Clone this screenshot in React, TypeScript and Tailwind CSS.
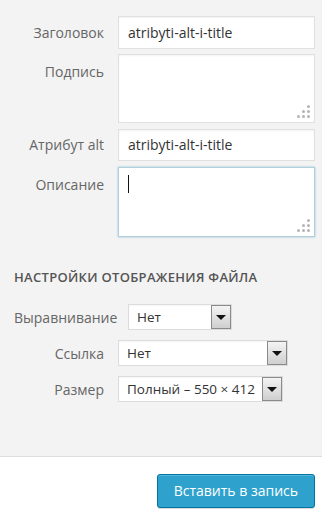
import React from "react";

const font = { fontFamily: '"Open Sans", "Noto Sans", sans-serif' };

function Grip() {
  // resize handle dots, triangle in bottom-right
  const dots = [
    [2, 0],
    [1, 1], [2, 1],
    [0, 2], [1, 2], [2, 2],
  ];
  return (
    <div className="absolute right-[3px] bottom-[3px] w-[14px] h-[14px]">
      {dots.map(([c, r], i) => (
        <span
          key={i}
          className="absolute w-[3px] h-[3px] rounded-full bg-[#b4b4b4]"
          style={{ left: c * 5, top: r * 5 }}
        />
      ))}
    </div>
  );
}

function Arrow() {
  return (
    <div className="w-[20px] self-stretch shrink-0 border border-[#8a8a8a] bg-gradient-to-b from-[#f4f4f4] to-[#cfcfcf] flex items-center justify-center">
      <span className="w-0 h-0 border-l-[5px] border-r-[5px] border-t-[5px] border-l-transparent border-r-transparent border-t-[#111]" />
    </div>
  );
}

function Select({ value, w }: { value: string; w: string }) {
  return (
    <div className={"h-[26px] flex items-stretch bg-white border border-[#dcdcdc] shadow-[inset_0_1px_2px_rgba(0,0,0,0.04)] " + w}>
      <span className="flex-1 pl-[8px] leading-[24px] text-[13.5px] text-[#333] whitespace-nowrap overflow-hidden">{value}</span>
      <Arrow />
    </div>
  );
}

export default function App() {
  return (
    <div style={font} className="w-[322px] h-[522px] bg-white flex flex-col overflow-hidden">
      <div className="bg-[#f3f3f3] h-[457px] border-b border-[#dedede] pt-[16px] pr-[7px] flex flex-col">
        {/* Заголовок */}
        <div className="flex">
          <div className="w-[104px] text-right text-[14px] text-[#666] leading-[33px]">Заголовок</div>
          <div className="ml-[14px] flex-1 h-[33px] bg-white border border-[#e0e0e0] shadow-[inset_0_1px_2px_rgba(0,0,0,0.05)] pl-[9px] text-[14px] leading-[31px] text-[#333]">
            atribyti-alt-i-title
          </div>
        </div>

        {/* Подпись */}
        <div className="flex mt-[5px]">
          <div className="w-[104px] text-right text-[14px] text-[#666] leading-[20px] pt-[8px]">Подпись</div>
          <div className="ml-[14px] flex-1 h-[69px] relative bg-white border border-[#e0e0e0] shadow-[inset_0_1px_2px_rgba(0,0,0,0.05)]">
            <Grip />
          </div>
        </div>

        {/* Атрибут alt */}
        <div className="flex mt-[6px]">
          <div className="w-[104px] text-right text-[14px] text-[#666] leading-[32px]">Атрибут alt</div>
          <div className="ml-[14px] flex-1 h-[32px] bg-white border border-[#e0e0e0] shadow-[inset_0_1px_2px_rgba(0,0,0,0.05)] pl-[9px] text-[14px] leading-[30px] text-[#333]">
            atribyti-alt-i-title
          </div>
        </div>

        {/* Описание */}
        <div className="flex mt-[6px]">
          <div className="w-[104px] text-right text-[14px] text-[#666] leading-[20px] pt-[8px]">Описание</div>
          <div className="ml-[14px] flex-1 h-[70px] relative bg-white border border-[#b4cfdc] shadow-[0_0_2px_rgba(30,140,190,0.45)]">
            <span className="absolute left-[9px] top-[7px] w-px h-[18px] bg-[#111]" />
            <Grip />
          </div>
        </div>

        {/* heading */}
        <div className="pl-[14px] mt-[30px] text-[13px] font-semibold text-[#555] tracking-[0.3px] leading-[20px] whitespace-nowrap">
          НАСТРОЙКИ ОТОБРАЖЕНИЯ ФАЙЛА
        </div>

        {/* Выравнивание */}
        <div className="flex items-center mt-[17px] pl-[14px]">
          <span className="w-[99px] shrink-0 text-[14px] text-[#666] whitespace-nowrap">Выравнивание</span>
          <div className="ml-[15px]">
            <Select value="Нет" w="w-[104px]" />
          </div>
        </div>

        {/* Ссылка */}
        <div className="flex items-center mt-[10px]">
          <div className="w-[104px] text-right text-[14px] text-[#666]">Ссылка</div>
          <div className="ml-[14px]">
            <Select value="Нет" w="w-[170px]" />
          </div>
        </div>

        {/* Размер */}
        <div className="flex items-center mt-[10px]">
          <div className="w-[104px] text-right text-[14px] text-[#666]">Размер</div>
          <div className="ml-[14px]">
            <Select value="Полный – 550 × 412" w="w-[165px]" />
          </div>
        </div>
      </div>

      {/* footer */}
      <div className="flex justify-end pr-[7px] pt-[17px]">
        <button className="h-[34px] px-[16px] rounded-[3px] bg-[#2ea2cc] border border-[#0074a2] shadow-[inset_0_1px_0_rgba(120,200,230,0.5),0_1px_0_rgba(0,0,0,0.15)] text-white text-[14px] leading-[32px] whitespace-nowrap">
          Вставить в запись
        </button>
      </div>
    </div>
  );
}
